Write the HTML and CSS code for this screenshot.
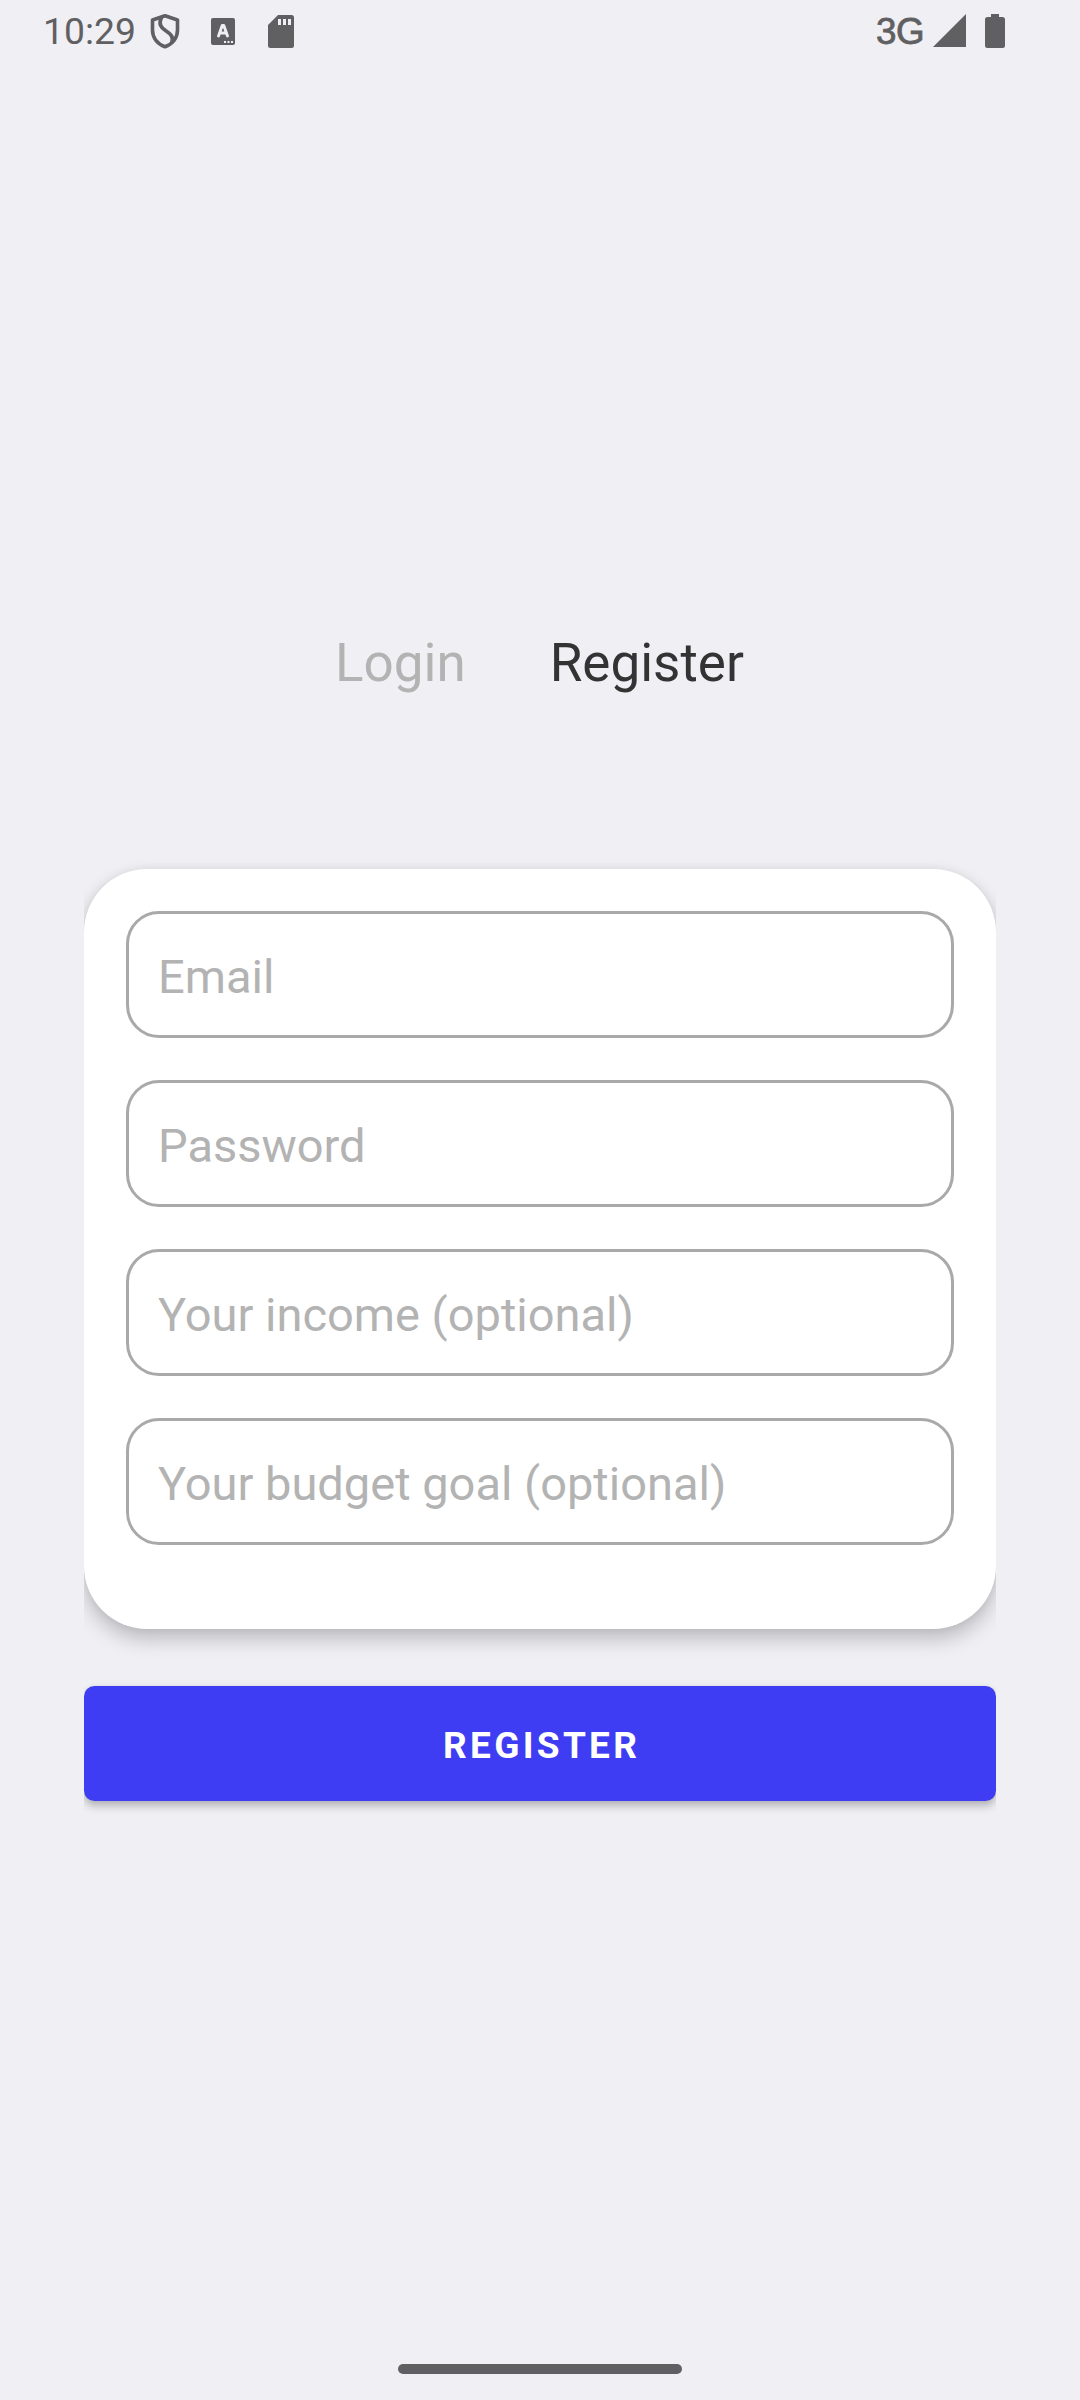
FILE: index.html
```html
<!DOCTYPE html>
<html lang="en">
<head>
<meta charset="utf-8">
<title>Register</title>
<link rel="stylesheet" href="styles.css">
</head>
<body>
<div class="screen">
  <header class="status-bar">
    <span class="clock">10:29</span>
    <svg class="icon-shield" width="32" height="36" viewBox="0 0 32 36">
      <path d="M16 2.700 L28.500 7 V17 C28.500 25 23.500 31 16 33.700 C8.500 31 3.500 25 3.500 17 V7 Z" fill="none" stroke="#606062" stroke-width="3.600" stroke-linejoin="round"/>
      <path d="M12.500 4 C9.500 11 11.500 14 16.500 17.500 C22.500 21.500 24.500 24 23 29.500" fill="none" stroke="#606062" stroke-width="3.800"/>
    </svg>
    <svg class="icon-font" width="24" height="27" viewBox="0 0 24 27">
      <rect width="24" height="27" rx="2" fill="#606062"/>
      <path d="M7.500 18 L11.200 7.500 H12.800 L16.500 18 M9 15 H15" fill="none" stroke="#f0eff4" stroke-width="2.900" stroke-linejoin="round" stroke-linecap="round"/>
      <path d="M13 23h2v2h-2zM16.500 23h2v2h-2zM20 23h2v2h-2z" fill="#f0eff4"/>
    </svg>
    <svg class="icon-card" width="26" height="33" viewBox="0 0 26 33">
      <path d="M10 0 H23.500 Q26 0 26 2.500 V30.500 Q26 33 23.500 33 H2.500 Q0 33 0 30.500 V10 Z" fill="#606062"/>
      <path d="M10 4h3v6h-3zM15 4h3v6h-3zM20 4h3v6h-3z" fill="#f0eff4"/>
    </svg>
    <span class="network">3G</span>
    <svg class="icon-signal" width="33" height="33" viewBox="0 0 33 33"><path d="M33 0 V33 H0 Z" fill="#606062"/></svg>
    <svg class="icon-battery" width="20" height="34" viewBox="0 0 20 34"><path d="M6 0 H14 V3 H17.500 Q20 3 20 5.500 V31.500 Q20 34 17.500 34 H2.500 Q0 34 0 31.500 V5.500 Q0 3 2.500 3 H6 Z" fill="#606062"/></svg>
  </header>
  <nav class="tabs">
    <span class="tab">Login</span>
    <span class="tab tab-active">Register</span>
  </nav>
  <main class="form">
    <section class="card">
      <div class="field">Email</div>
      <div class="field">Password</div>
      <div class="field">Your income (optional)</div>
      <div class="field">Your budget goal (optional)</div>
    </section>
    <div class="button">REGISTER</div>
  </main>
  <div class="home-handle"></div>
</div>
</body>
</html>
```
FILE: styles.css
```css
body {
  margin: 0;
  background: #f0eff4;
  font-family: Roboto, "Liberation Sans", sans-serif;
}

.screen {
  box-sizing: border-box;
  width: 1080px;
  height: 2400px;
  display: flex;
  flex-direction: column;
  overflow: hidden;
  padding-bottom: 26px;
}

.status-bar {
  box-sizing: border-box;
  height: 63px;
  display: flex;
  align-items: flex-start;
  padding: 0 75px 0 43px;
  color: #606062;
}

.clock {
  width: 106px;
  margin-top: 9px;
  font-size: 37.3px;
  line-height: 44px;
  white-space: nowrap;
}

.icon-shield { margin-top: 13px; }
.icon-font { margin: 18px 0 0 30px; }
.icon-card { margin: 15px 0 0 33px; }

.network {
  margin: 9px 9px 0 auto;
  font-family: "Liberation Sans", sans-serif;
  font-size: 36.75px;
  line-height: 45px;
  letter-spacing: -0.5px;
  -webkit-text-stroke: 0.8px #606062;
}

.icon-signal { margin-top: 14px; }
.icon-battery { margin: 14px 0 0 19px; }

.tabs {
  display: flex;
  gap: 84px;
  padding-left: 335px;
  margin-top: 569px;
  height: 62px;
  font-size: 53px;
  line-height: 62px;
  color: #b3b3b3;
}

.tab-active { color: #333333; }

.form {
  margin: 175px 84px 0;
  display: flex;
  flex-direction: column;
  gap: 57px;
  clip-path: inset(-30px 0);
}

.card {
  box-sizing: border-box;
  height: 760px;
  padding: 42px;
  display: flex;
  flex-direction: column;
  gap: 42px;
  background: #ffffff;
  border-radius: 63px;
  box-shadow: 0 10px 20px rgba(0, 0, 0, 0.22), 0 0 8px rgba(0, 0, 0, 0.06);
}

.field {
  box-sizing: border-box;
  height: 127px;
  padding-left: 29px;
  border: 3px solid #a9a9a9;
  border-radius: 33px;
  font-size: 47px;
  line-height: 126px;
  color: #b3b3b3;
}

.button {
  height: 115px;
  border-radius: 10.5px;
  background: #3f3df3;
  box-shadow: 0 5px 9px rgba(0, 0, 0, 0.25), 0 0 3px rgba(0, 0, 0, 0.06);
  color: #ffffff;
  font-size: 37px;
  font-weight: 700;
  letter-spacing: 3.3px;
  line-height: 119px;
  text-indent: 3.3px;
  text-align: center;
}

.home-handle {
  width: 284px;
  height: 10px;
  margin: auto auto 0;
  border-radius: 5px;
  background: #606062;
}
```
